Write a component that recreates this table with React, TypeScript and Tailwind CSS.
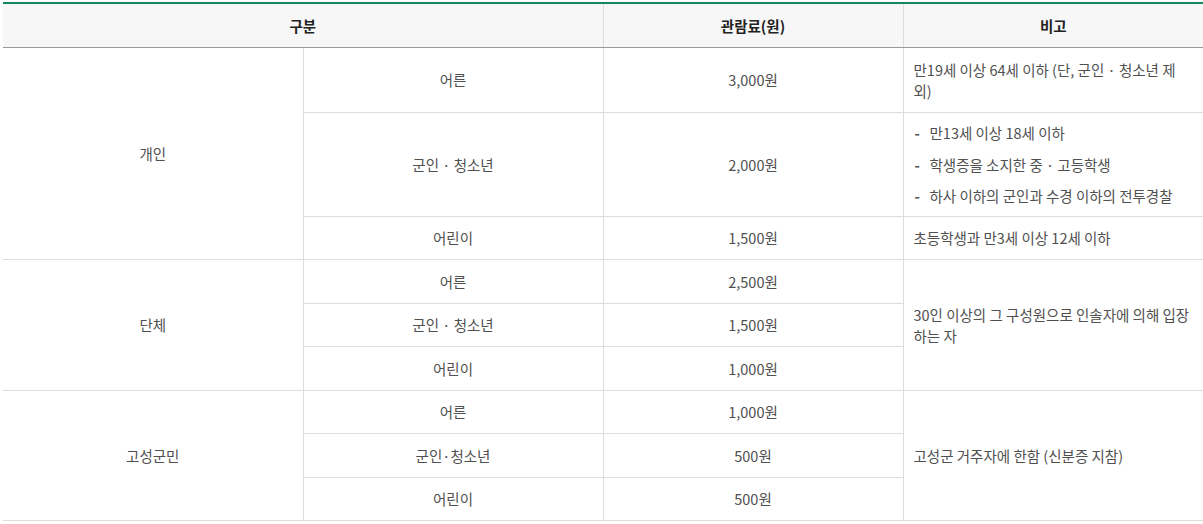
const FONT = { fontFamily: '"Noto Sans CJK KR", "Noto Sans", sans-serif' }

function Bullets({ items }: { items: string[] }) {
  return (
    <ul className="flex flex-col gap-[10.5px]">
      {items.map(t => (
        <li key={t} className="flex">
          <span className="w-[16px] shrink-0 pl-[1px] font-bold">-</span>
          <span>{t}</span>
        </li>
      ))}
    </ul>
  )
}

const td = 'border-b border-[#dddddd] px-[10px] py-0 text-center align-middle'
const tdL = 'border-b border-[#dddddd] border-l px-[10px] py-0 text-left align-middle'

export default function App() {
  return (
    <div className="bg-white pt-[2px] pl-[3px] w-[1203px] h-[524px] overflow-hidden" style={FONT}>
      <table className="w-[1200px] table-fixed border-collapse border-t-2 border-t-[#13875e] text-[14.5px] leading-[21px] text-[#505050]">
        <colgroup>
          <col className="w-[300px]" />
          <col className="w-[300px]" />
          <col className="w-[300px]" />
          <col className="w-[300px]" />
        </colgroup>
        <thead>
          <tr className="h-[44px] bg-[#f7f7f7]">
            <th colSpan={2} className="border-b border-b-[#999999] font-bold text-[#222222] align-middle">구분</th>
            <th className="border-b border-b-[#999999] border-l border-l-[#dddddd] font-bold text-[#222222] align-middle">관람료(원)</th>
            <th className="border-b border-b-[#999999] border-l border-l-[#dddddd] font-bold text-[#222222] align-middle">비고</th>
          </tr>
        </thead>
        <tbody>
          <tr className="h-[65px]">
            <td rowSpan={3} className={td}>개인</td>
            <td className={`${td} border-l`}>어른</td>
            <td className={`${td} border-l`}>3,000원</td>
            <td className={tdL}>만19세 이상 64세 이하 (단, 군인 · 청소년 제외)</td>
          </tr>
          <tr className="h-[104px]">
            <td className={`${td} border-l`}>군인 · 청소년</td>
            <td className={`${td} border-l`}>2,000원</td>
            <td className={tdL}>
              <Bullets items={['만13세 이상 18세 이하', '학생증을 소지한 중 · 고등학생', '하사 이하의 군인과 수경 이하의 전투경찰']} />
            </td>
          </tr>
          <tr className="h-[43px]">
            <td className={`${td} border-l`}>어린이</td>
            <td className={`${td} border-l`}>1,500원</td>
            <td className={tdL}>초등학생과 만3세 이상 12세 이하</td>
          </tr>

          <tr className="h-[44px]">
            <td rowSpan={3} className={td}>단체</td>
            <td className={`${td} border-l`}>어른</td>
            <td className={`${td} border-l`}>2,500원</td>
            <td rowSpan={3} className={tdL}>30인 이상의 그 구성원으로 인솔자에 의해 입장하는 자</td>
          </tr>
          <tr className="h-[43px]">
            <td className={`${td} border-l`}>군인 · 청소년</td>
            <td className={`${td} border-l`}>1,500원</td>
          </tr>
          <tr className="h-[44px]">
            <td className={`${td} border-l`}>어린이</td>
            <td className={`${td} border-l`}>1,000원</td>
          </tr>

          <tr className="h-[43px]">
            <td rowSpan={3} className={td}>고성군민</td>
            <td className={`${td} border-l`}>어른</td>
            <td className={`${td} border-l`}>1,000원</td>
            <td rowSpan={3} className={tdL}>고성군 거주자에 한함 (신분증 지참)</td>
          </tr>
          <tr className="h-[44px]">
            <td className={`${td} border-l`}>군인·청소년</td>
            <td className={`${td} border-l`}>500원</td>
          </tr>
          <tr className="h-[43px]">
            <td className={`${td} border-l`}>어린이</td>
            <td className={`${td} border-l`}>500원</td>
          </tr>
        </tbody>
      </table>
    </div>
  )
}
